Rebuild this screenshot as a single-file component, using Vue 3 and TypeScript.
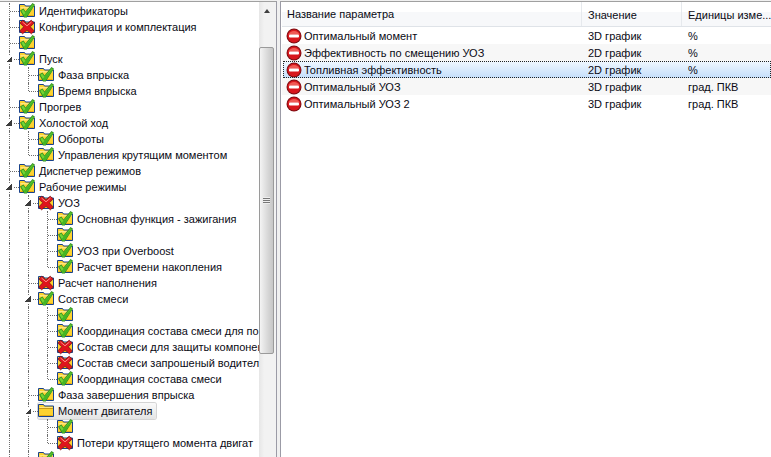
<script setup lang="ts">
type Kind = 'ok' | 'err' | 'folder'
interface Node { label: string; kind?: Kind; selected?: boolean; children?: Node[] }
interface Row { label: string; kind: Kind; selected: boolean; depth: number; guides: boolean[]; hasNext: boolean; open: boolean }

const tree: Node[] = [
  { label: 'Идентификаторы' },
  { label: 'Конфигурация и комплектация', kind: 'err' },
  { label: '' },
  { label: 'Пуск', children: [{ label: 'Фаза впрыска' }, { label: 'Время впрыска' }] },
  { label: 'Прогрев' },
  { label: 'Холостой ход', children: [{ label: 'Обороты' }, { label: 'Управления крутящим моментом' }] },
  { label: 'Диспетчер режимов' },
  {
    label: 'Рабочие режимы',
    children: [
      {
        label: 'УОЗ', kind: 'err',
        children: [
          { label: 'Основная функция - зажигания' },
          { label: '' },
          { label: 'УОЗ при Overboost' },
          { label: 'Расчет времени накопления' },
        ],
      },
      { label: 'Расчет наполнения', kind: 'err' },
      {
        label: 'Состав смеси',
        children: [
          { label: '' },
          { label: 'Координация состава смеси для по' },
          { label: 'Состав смеси для защиты компонен', kind: 'err' },
          { label: 'Состав смеси запрошеный водител', kind: 'err' },
          { label: 'Координация состава смеси' },
        ],
      },
      { label: 'Фаза завершения впрыска' },
      {
        label: 'Момент двигателя', kind: 'folder', selected: true,
        children: [{ label: '' }, { label: 'Потери крутящего момента двигат', kind: 'err' }],
      },
      { label: '' },
      { label: '' },
    ],
  },
  { label: '' },
]

function flatten(nodes: Node[], depth: number, guides: boolean[]): Row[] {
  return nodes.flatMap((n, i) => {
    const hasNext = i < nodes.length - 1
    const row: Row = {
      label: n.label,
      kind: n.kind ?? 'ok',
      selected: !!n.selected,
      depth,
      guides,
      hasNext,
      open: !!n.children,
    }
    return [row, ...flatten(n.children ?? [], depth + 1, [...guides, hasNext])]
  })
}

const rows = flatten(tree, 0, [])

const params = [
  { name: 'Оптимальный момент', value: '3D график', unit: '%' },
  { name: 'Эффективность по смещению УОЗ', value: '2D график', unit: '%' },
  { name: 'Топливная эффективность', value: '2D график', unit: '%' },
  { name: 'Оптимальный УОЗ', value: '3D график', unit: 'град. ПКВ' },
  { name: 'Оптимальный УОЗ 2', value: '3D график', unit: 'град. ПКВ' },
]
</script>

<template>
  <div class="window">
    <section class="left">
      <div class="tree">
        <div v-for="(r, i) in rows" :key="i" class="row">
          <span v-for="(g, j) in r.guides" :key="j" class="cell" :class="{ through: g }"></span>
          <span class="cell link" :class="{ through: r.hasNext }">
            <span v-if="r.open" class="expander"></span>
          </span>
          <span class="node" :class="{ selected: r.selected }">
            <svg class="icon" width="16" height="16" viewBox="0 0 16 16">
              <path d="M.5 1.500h5l1 1.500h9v10.500H.5z" fill="#fdd22f" stroke="#17418c" />
              <path d="M1.500 4h13v1.500h-13z" fill="#ffe680" />
              <path d="M1.500 12h13v1h-13z" fill="#e8ac14" />
              <path v-if="r.kind === 'folder'" d="M1 5.500h14" stroke="#c99a12" fill="none" />
              <template v-if="r.kind === 'ok'">
                <path d="M1 7.500 4.500 5.500 6.500 8.500 13.500 0 16 1.800 7.800 14.500H5z" fill="#2f8f22" />
                <path d="M2.200 7.800 4.300 6.600 6.500 9.800 13.700 1.300 15 2.200 7.300 13.600H5.700z" fill="#74d432" />
                <path d="M4.800 11.800 13.900 2 15 2.200 7.300 13.600H5.700z" fill="#45b524" />
              </template>
              <template v-if="r.kind === 'err'">
                <path d="M.8 4 3.800 1.200 8 4.800 12.200 1.200 15.200 4 11.300 7.800 15.300 12 12.400 14.800 8 11 3.600 14.800.7 12 4.700 7.800z" fill="#e0141c" stroke="#74161c" stroke-width=".8" />
                <path d="M3.500 3 8 6.800 12.500 3" fill="none" stroke="#fb8d88" />
              </template>
            </svg>
            <span class="label">{{ r.label }}</span>
          </span>
        </div>
      </div>
      <div class="scrollbar">
        <div class="arrow"></div>
        <div class="thumb">
          <span class="grip"></span>
        </div>
      </div>
    </section>

    <section class="right">
      <header class="head">
        <span class="col name">Название параметра</span>
        <span class="col value">Значение</span>
        <span class="col unit">Единицы изме...</span>
      </header>
      <div
        v-for="(p, i) in params"
        :key="p.name"
        class="line"
        :class="{ alt: i % 2 === 1, current: i === 2 }"
      >
        <span class="col name">
          <svg class="stop" width="16" height="16" viewBox="0 0 16 16">
            <circle cx="8" cy="8" r="7.500" fill="#7d0f14" />
            <circle cx="8" cy="8" r="6.500" fill="#d8161c" />
            <path d="M2.500 6.500a6 6 0 0 1 11 0z" fill="#ef5a55" />
            <rect x="3" y="6.500" width="10" height="3" rx="1" fill="#fff" />
          </svg>
          <span>{{ p.name }}</span>
        </span>
        <span class="col value">{{ p.value }}</span>
        <span class="col unit">{{ p.unit }}</span>
      </div>
    </section>
  </div>
</template>

<style scoped>
.window {
  display: flex;
  width: 771px;
  height: 457px;
  overflow: hidden;
  padding-top: 1px;
  box-sizing: border-box;
  gap: 3px;
  background: #f0f0f0;
  font: 11px "Liberation Sans", Tahoma, sans-serif;
  color: #0a0a14;
}
.left {
  display: flex;
  width: 277px;
  flex: none;
  background: #fff;
  border-top: 1px solid #a0a0a0;
  border-right: 1px solid #9b9ba6;
  box-sizing: border-box;
}
.tree {
  width: 259px;
  flex: none;
  overflow: hidden;
  padding-top: 1px;
}
.row {
  display: flex;
  height: 16px;
  white-space: nowrap;
}
.cell {
  position: relative;
  display: block;
  flex: none;
  width: 19px;
  height: 16px;
}
.cell.through::before,
.link::before {
  content: "";
  position: absolute;
  left: 9px;
  top: 0;
  bottom: 0;
  border-left: 1px dotted #6e6e6e;
}
.link:not(.through)::before {
  bottom: 8px;
}
.link::after {
  content: "";
  position: absolute;
  left: 10px;
  right: 0;
  top: 8px;
  border-top: 1px dotted #6e6e6e;
}
.expander {
  position: absolute;
  z-index: 1;
  left: 6px;
  top: 5px;
  width: 6px;
  height: 6px;
  background: linear-gradient(135deg, #fff 50%, #3c3c3c 50%);
  box-shadow: 0 0 0 1px #fff;
}
.node {
  display: flex;
  align-items: center;
  height: 16px;
}
.node.selected {
  padding-right: 4px;
  background: linear-gradient(#fafafa, #e4e4e4);
  border-radius: 2px;
  box-shadow: 0 0 0 1px #d4d4d4;
}
.icon {
  display: block;
  flex: none;
}
.label {
  margin-left: 4px;
  line-height: 16px;
}
.scrollbar {
  flex: 1;
  display: flex;
  flex-direction: column;
  background: linear-gradient(90deg, #e6e6e6, #f2f2f2 30%);
  box-sizing: border-box;
}
.arrow {
  position: relative;
  height: 17px;
  flex: none;
}
.arrow::before {
  content: "";
  position: absolute;
  left: 5px;
  top: 7px;
  border: 3.500px solid transparent;
  border-top: 0;
  border-bottom: 4px solid #404040;
}
.thumb {
  display: flex;
  align-items: center;
  justify-content: center;
  width: 15px;
  height: 307px;
  margin-top: 28px;
  box-sizing: border-box;
  border: 1px solid #9a9a9a;
  border-radius: 2px;
  background: linear-gradient(90deg, #f4f4f4, #dcdcdc 50%, #c6c6c6);
}
.grip {
  display: block;
  width: 7px;
  height: 7px;
  background: repeating-linear-gradient(#eee 0 1px, #777 1px 2px);
}
.right {
  flex: 1;
  min-width: 0;
  padding-left: 1px;
  background: #fff;
  border-top: 1px solid #a0a0a0;
  border-left: 1px solid #9b9ba6;
  box-sizing: border-box;
}
.head {
  display: flex;
  align-items: center;
  height: 25px;
  box-sizing: border-box;
  border-bottom: 1px solid #dfe3e8;
  background: linear-gradient(#fff 40%, #f7f8fa 40%);
}
.col {
  flex: none;
  box-sizing: border-box;
  white-space: nowrap;
}
.name {
  display: flex;
  align-items: center;
  gap: 2px;
  width: 299px;
  padding-left: 4px;
}
.value {
  width: 100px;
  padding-left: 6px;
}
.unit {
  width: 88px;
  padding-left: 6px;
}
.head .col {
  line-height: 26px;
  height: 24px;
}
.head .name {
  padding-left: 5px;
}
.head .value,
.head .unit {
  border-left: 1px solid #e6e9ed;
}
.line {
  display: flex;
  align-items: center;
  height: 17px;
  box-sizing: border-box;
}
.line .value,
.line .unit {
  border-left: 1px solid transparent;
}
.stop {
  display: block;
  flex: none;
}
.alt {
  background: #f7f7f7;
}
.current {
  margin-left: 1px;
  background: linear-gradient(#f1f8ff, #c4defb);
  outline: 1px dotted #222;
  outline-offset: -1px;
}
.current .name {
  width: 298px;
  padding-left: 3px;
}
</style>
